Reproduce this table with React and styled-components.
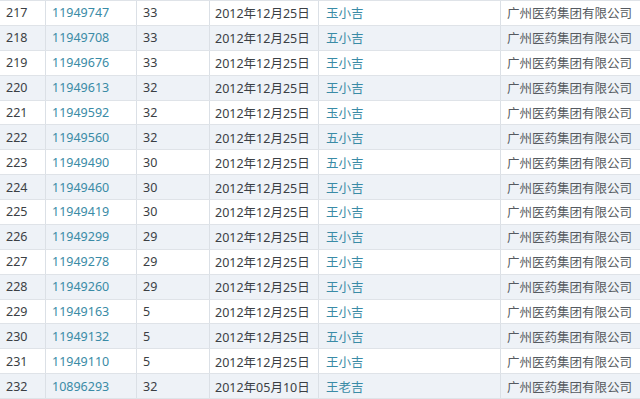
import React from 'react';
import styled, { createGlobalStyle } from 'styled-components';

const GlobalStyle = createGlobalStyle`
  html, body {
    margin: 0;
    padding: 0;
    background: #ffffff;
    overflow: hidden;
  }
  body {
    font-family: "Noto Sans", "Noto Sans CJK SC", sans-serif;
  }
`;

const rows = [
  [217, '11949747', 33, '2012年12月25日', '玉小吉'],
  [218, '11949708', 33, '2012年12月25日', '五小吉'],
  [219, '11949676', 33, '2012年12月25日', '王小吉'],
  [220, '11949613', 32, '2012年12月25日', '王小吉'],
  [221, '11949592', 32, '2012年12月25日', '玉小吉'],
  [222, '11949560', 32, '2012年12月25日', '五小吉'],
  [223, '11949490', 30, '2012年12月25日', '五小吉'],
  [224, '11949460', 30, '2012年12月25日', '王小吉'],
  [225, '11949419', 30, '2012年12月25日', '王小吉'],
  [226, '11949299', 29, '2012年12月25日', '玉小吉'],
  [227, '11949278', 29, '2012年12月25日', '王小吉'],
  [228, '11949260', 29, '2012年12月25日', '王小吉'],
  [229, '11949163', 5, '2012年12月25日', '王小吉'],
  [230, '11949132', 5, '2012年12月25日', '五小吉'],
  [231, '11949110', 5, '2012年12月25日', '王小吉'],
  [232, '10896293', 32, '2012年05月10日', '王老吉'],
];

const Table = styled.div`
  width: 640px;
  border-top: 1px solid #dfe3e8;
`;

const Row = styled.div`
  display: grid;
  grid-template-columns: 46px 91px 73px 109px 182px 1fr;
  height: 24.875px;
  box-sizing: border-box;
  border-bottom: 1px solid #dfe3e8;
  background: ${p => (p.$shaded ? '#eef2f7' : '#ffffff')};
`;

const Cell = styled.div`
  display: flex;
  align-items: center;
  padding-left: ${p => p.$pad || 6}px;
  border-right: 1px solid #dbe0e6;
  font-size: 12.5px;
  white-space: nowrap;
  overflow: hidden;
  color: ${p => (p.$link ? '#3a8ba6' : p.$muted ? '#555a60' : '#3b3f44')};

  &:first-child {
    padding-left: 6px;
  }
  &:last-child {
    border-right: none;
  }
`;

export default function App() {
  return (
    <>
      <GlobalStyle />
      <Table>
        {rows.map(([no, id, cls, date, name]) => (
          <Row key={no} $shaded={no % 2 === 0}>
            <Cell>{no}</Cell>
            <Cell $link>{id}</Cell>
            <Cell>{cls}</Cell>
            <Cell $pad={5}>{date}</Cell>
            <Cell $link $pad={7}>{name}</Cell>
            <Cell $muted>广州医药集团有限公司</Cell>
          </Row>
        ))}
      </Table>
    </>
  );
}
